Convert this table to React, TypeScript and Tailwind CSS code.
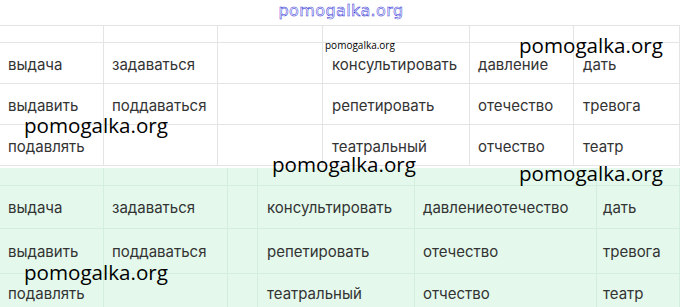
import React from 'react';

const topRows = [
  ['', '', '', '', '', ''],
  ['выдача', 'задаваться', '', 'консультировать', 'давление', 'дать'],
  ['выдавить', 'поддаваться', '', 'репетировать', 'отечество', 'тревога'],
  ['подавлять', '', '', 'театральный', 'отчество', 'театр'],
];

const greenRows = [
  ['', '', '', '', '', ''],
  ['выдача', 'задаваться', '', 'консультировать', 'давлениеотечество', 'дать'],
  ['выдавить', 'поддаваться', '', 'репетировать', 'отечество', 'тревога'],
  ['подавлять', '', '', 'театральный', 'отчество', 'театр'],
];

const topHeights = ['h-[17px]', 'h-[41px]', 'h-[41px]', 'h-[41px]'];
const greenHeights = ['h-[18px]', 'h-[43px]', 'h-[45px]', 'h-[40px]'];

const cellFont = { fontFamily: 'Inter, "Noto Sans", sans-serif' };

const Watermark: React.FC<{ className: string }> = ({ className }) => (
  <span
    className={`absolute text-[20.6px] leading-none text-black ${className}`}
    style={{ fontFamily: '"Open Sans", sans-serif' }}
  >
    pomogalka.org
  </span>
);

export default function App() {
  return (
    <div className="relative w-[680px] h-[307px] overflow-hidden bg-white">
      <div className="h-[25px] flex justify-center pt-[1px] pl-[2px]">
        <span
          className="text-[16px] leading-[20px] text-white tracking-[0.4px] [-webkit-text-stroke:0.5px_#2d2dd6]"
          style={{ fontFamily: '"DejaVu Sans", sans-serif' }}
        >
          pomogalka.org
        </span>
      </div>

      <div className="border-t border-[#e4e4e4]" style={cellFont}>
        {topRows.map((row, i) => (
          <div
            key={i}
            className={`grid grid-cols-[104px_114px_105px_147px_104px_1fr] border-b border-[#e4e4e4] ${topHeights[i]}`}
          >
            {row.map((cell, j) => (
              <div
                key={j}
                className={`flex items-center pt-[4px] text-[15px] text-[#333] border-r border-[#e4e4e4] ${
                  j === 3 ? 'pl-[9px]' : j === 5 ? 'pl-[9px]' : 'pl-[8px]'
                }`}
              >
                {cell}
              </div>
            ))}
          </div>
        ))}
      </div>

      <div className="mt-[2px] bg-[#e4f9ec]" style={cellFont}>
        {greenRows.map((row, i) => (
          <div
            key={i}
            className={`grid grid-cols-[104px_124px_30px_157px_182px_1fr] border-b border-[#d3eedd] ${greenHeights[i]}`}
          >
            {row.map((cell, j) => (
              <div
                key={j}
                className={`flex items-center pt-[2px] text-[15px] text-[#333] border-r border-[#d3eedd] ${
                  j === 3 ? 'pl-[9px]' : j === 5 ? 'pl-[6px]' : 'pl-[8px]'
                }`}
              >
                {cell}
              </div>
            ))}
          </div>
        ))}
      </div>

      <span
        className="absolute left-[325px] top-[40px] text-[10px] leading-none text-black"
        style={{ fontFamily: '"Open Sans", sans-serif' }}
      >
        pomogalka.org
      </span>
      <Watermark className="left-[519px] top-[35px]" />
      <Watermark className="left-[24px] top-[115px]" />
      <Watermark className="left-[272px] top-[154px]" />
      <Watermark className="left-[519px] top-[163px]" />
      <Watermark className="left-[24px] top-[262px]" />
    </div>
  );
}
